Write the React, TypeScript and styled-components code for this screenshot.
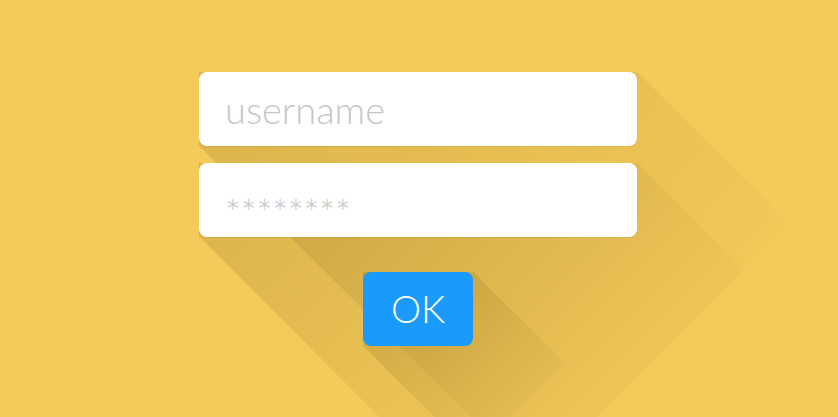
import React from "react";
import styled, { createGlobalStyle } from "styled-components";

const GlobalStyle = createGlobalStyle`
  html, body {
    margin: 0;
    padding: 0;
    background: #f4cb5a;
  }
  * {
    box-sizing: border-box;
  }
`;

type ShadowProps = {
  $w: number;
  $h: number;
  $reach: number;
  $alpha: number;
  $tail: number;
};

// long 45deg shadow, cut off along x + y = reach and fading toward it
const longShadow = ({ $w, $h, $reach, $alpha, $tail }: ShadowProps) => {
  const t = ($reach - $w) / 2;
  const s = ($reach - $h) / 2;
  const stop = Math.round($reach / Math.SQRT2);
  return `
    &::before {
      content: "";
      position: absolute;
      top: 0;
      left: 0;
      width: ${$w + t}px;
      height: ${$h + s}px;
      z-index: -1;
      pointer-events: none;
      clip-path: polygon(0 0, ${$w}px 0, ${$w + t}px ${t}px, ${s}px ${$h + s}px, 0 ${$h}px);
      background: linear-gradient(
        135deg,
        rgba(90, 60, 0, ${$alpha}) 0,
        rgba(90, 60, 0, ${$tail}) ${stop}px,
        transparent ${stop}px
      );
    }
  `;
};

const Page = styled.div`
  position: relative;
  z-index: 0;
  width: 100vw;
  height: 100vh;
  overflow: hidden;
  background: #f4cb5a;
  display: flex;
  flex-direction: column;
  align-items: center;
  justify-content: center;
`;

const Form = styled.form`
  display: flex;
  flex-direction: column;
  align-items: center;
  margin: 0 0 0 -2px;
`;

const Field = styled.div<ShadowProps>`
  position: relative;
  width: ${(p) => p.$w}px;
  height: ${(p) => p.$h}px;
  margin-bottom: 17px;
  ${longShadow}
`;

const Input = styled.input`
  display: block;
  width: 100%;
  height: 100%;
  border: none;
  outline: none;
  border-radius: 8px;
  background: #fff;
  box-shadow: 0 1px 0 rgba(0, 0, 0, 0.06);
  padding: 0 0 0 26px;
  font-family: Lato, "Open Sans", sans-serif;
  font-weight: 300;
  font-size: 38px;
  color: #999;

  &::placeholder {
    color: #c6c6c6;
  }
`;

const PasswordInput = styled(Input)`
  padding: 26px 0 0 26px;
  font-size: 37px;
`;

const ButtonWrap = styled.div<ShadowProps>`
  position: relative;
  width: ${(p) => p.$w}px;
  height: ${(p) => p.$h}px;
  margin-top: 18px;
  ${longShadow}
`;

const Button = styled.button`
  width: 100%;
  height: 100%;
  border: none;
  border-radius: 8px;
  background: #1a9bfc;
  color: #fff;
  font-family: Lato, "Open Sans", sans-serif;
  font-weight: 300;
  font-size: 38px;
  padding: 0 0 1px;
  cursor: pointer;
`;

export default function App() {
  return (
    <>
      <GlobalStyle />
      <Page>
        <Form onSubmit={(e) => e.preventDefault()}>
          <Field $w={438} $h={74} $reach={743} $alpha={0.17} $tail={0.02}>
            <Input type="text" placeholder="username" />
          </Field>
          <Field $w={438} $h={74} $reach={653} $alpha={0.17} $tail={0.02}>
            <PasswordInput type="password" placeholder="********" />
          </Field>
          <ButtonWrap $w={110} $h={74} $reach={294} $alpha={0.18} $tail={0.03}>
            <Button type="submit">OK</Button>
          </ButtonWrap>
        </Form>
      </Page>
    </>
  );
}
